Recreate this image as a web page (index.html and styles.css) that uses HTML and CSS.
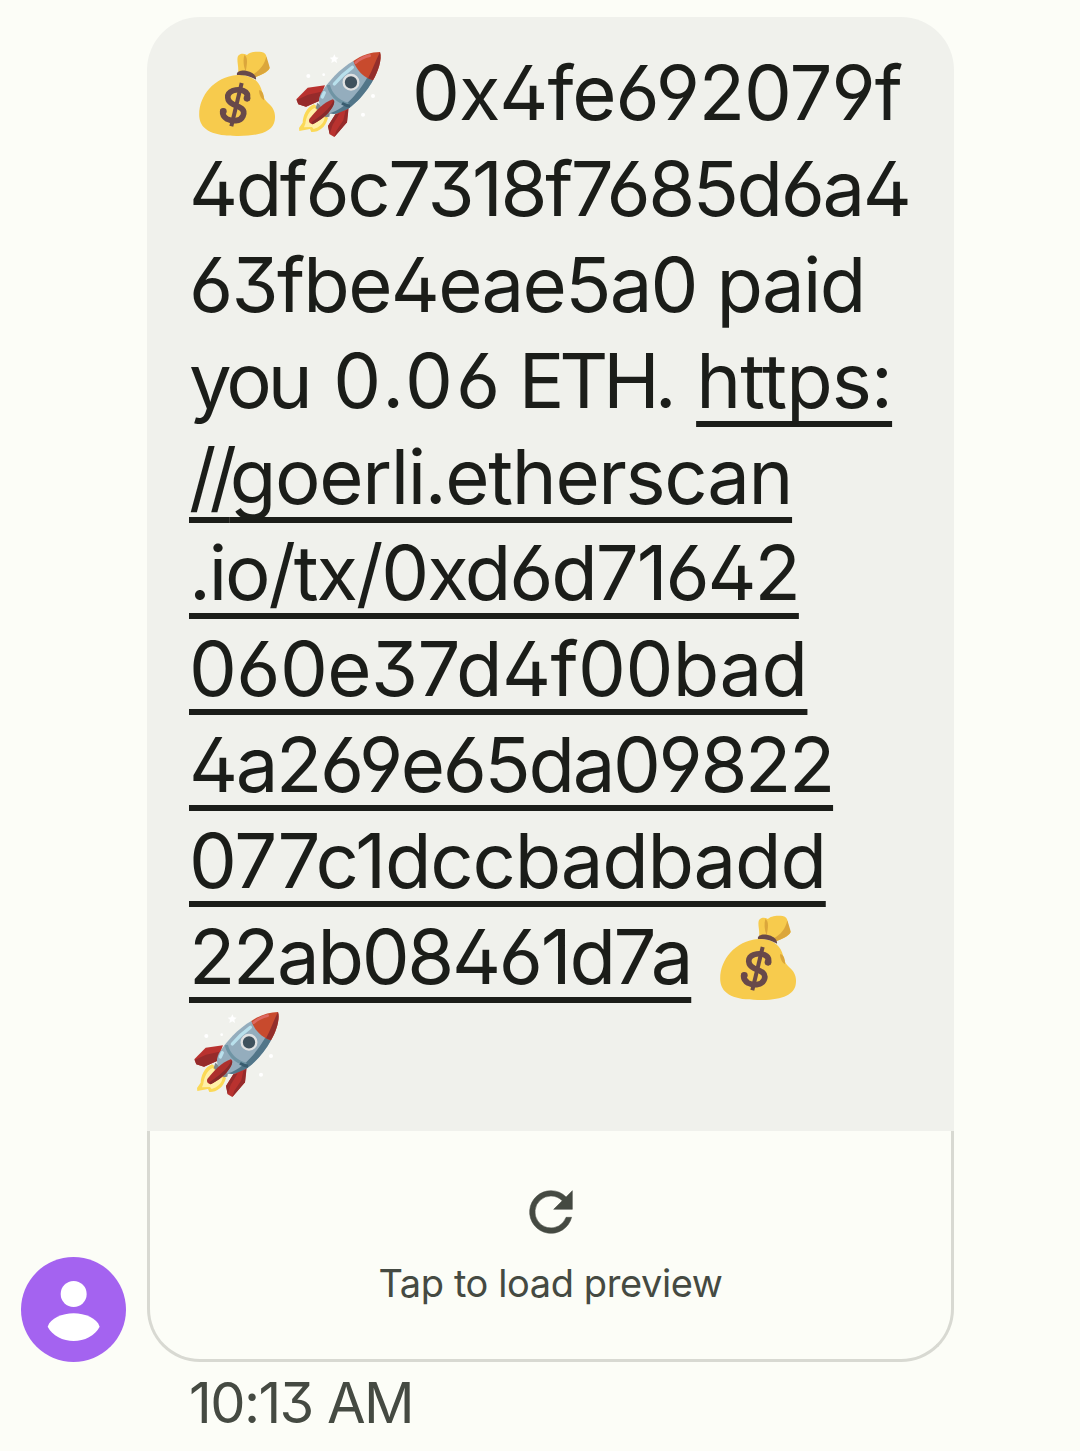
FILE: index.html
```html
<!DOCTYPE html>
<html lang="en">
<head>
<meta charset="utf-8">
<title>Messages</title>
<link rel="stylesheet" href="styles.css">
</head>
<body>
<svg class="defs" aria-hidden="true">
  <symbol id="moneybag" viewBox="27 30 288 264">
    <path fill="#f7cb4d" d="M174 98C178 82 166 53 177 45C184 39 193 41 201 45C207 37 226 33 245 36C257 38 261 46 259 62C258 70 268 76 269 84C264 98 241 105 226 112Z"/>
    <path fill="#dba63b" d="M193 45C204 51 202 70 197 94C190 79 189 59 193 45ZM259 49C264 65 268 77 269 84C262 98 242 104 226 112L219 103C239 92 254 74 259 49Z"/>
    <path fill="#f7cb4d" d="M172 105C201 103 233 115 243 145C250 164 249 176 264 189C281 203 288 220 284 242C279 271 246 288 176 288C105 289 63 274 58 232C53 174 98 111 172 105Z"/>
    <path fill="#dba63b" d="M237 151C247 149 253 166 252 181C244 177 237 164 237 151Z"/>
    <path fill="#68494a" d="M171 105C168 95 182 90 198 92C215 95 230 105 228 119C219 114 200 103 171 105Z"/>
    <path fill="none" stroke="#68494a" stroke-width="12" d="M185 129L154 259"/>
    <path fill="none" stroke="#68494a" stroke-width="17" stroke-linecap="round" d="M202 175C207 153 181 145 159 152C136 161 140 184 160 193C182 202 198 209 189 228C181 246 155 244 141 237C131 231 127 224 128 214"/>
    <circle cx="201" cy="175" r="10" fill="#68494a"/>
    <circle cx="130" cy="214" r="10" fill="#68494a"/>
  </symbol>
  <symbol id="rocket" viewBox="27 30 288 264">
    <g fill="#fff">
      <path d="M157 43L161 52L170 53L163 59L165 69L157 64L148 69L150 59L143 53L153 52Z"/>
      <circle cx="79" cy="108" r="6"/><circle cx="125" cy="104" r="4"/>
      <circle cx="273" cy="168" r="6"/><circle cx="243" cy="224" r="6"/>
    </g>
    <path fill="#b9322f" d="M129 136L77 143L43 178L49 193L72 200L111 183Z"/>
    <path fill="#962b2b" d="M118 155L78 164L44 180L49 193L72 200L111 183Z"/>
    <path fill="#fbd957" d="M96 193C72 202 63 229 62 248L51 264L52 273L84 267L88 276C109 277 130 264 138 234L112 204Z"/>
    <path fill="#fff0a8" d="M98 204C81 210 73 232 70 251L66 262L90 261L95 267C111 262 126 250 128 233Z"/>
    <path fill="#7d868b" d="M106 188L101 204L131 232L142 230L144 218Z"/>
    <path fill="#94adbd" d="M214 63C174 86 137 126 117 160C107 180 109 196 125 212C140 224 160 223 175 219C208 207 250 164 273 121C260 95 239 77 214 63Z"/>
    <path fill="#527689" d="M260 106L273 121C250 164 208 207 175 219C160 223 148 222 143 220C190 208 235 151 260 106Z"/>
    <path fill="#c84a2d" d="M214 63C239 45 269 36 294 36C301 57 288 96 273 121C245 113 224 91 214 63Z"/>
    <path fill="#932e2b" d="M294 36C301 57 288 96 273 121L258 115C272 89 281 61 294 36Z"/>
    <path fill="none" stroke="#dd6860" stroke-width="8" stroke-linecap="round" d="M221 68C235 56 249 50 263 47"/>
    <path fill="none" stroke="#6f94a4" stroke-width="10" d="M139 135C145 161 166 186 199 193"/>
    <path fill="none" stroke="#395d70" stroke-width="9" d="M180 190Q191 197 204 199"/>
    <path fill="none" stroke="#b9e0ec" stroke-width="10" stroke-linecap="round" d="M157 132Q180 104 211 82M121 171L127 158"/>
    <circle cx="207" cy="127" r="22" fill="#3f515d" stroke="#e0e1e2" stroke-width="7"/>
    <path fill="#b9322f" d="M198 207L160 223L138 258L143 283L157 291L195 247Z"/>
    <path fill="#962b2b" d="M160 223L138 258L143 283L152 254L172 221ZM200 205L195 247L157 291L163 272L184 241L190 213Z"/>
    <path fill="#ad302d" d="M152 178C160 181 157 191 151 202C137 225 115 242 92 253C83 251 79 245 82 237C101 213 125 188 152 178Z"/>
    <path fill="#872a2b" d="M155 181C158 188 156 194 151 202C137 225 115 242 92 253L88 247C115 229 144 207 155 181Z"/>
  </symbol>
</svg>
<main class="thread">
  <div class="message">
    <svg class="avatar" viewBox="0 0 315 315" role="img" aria-label="Contact">
      <circle cx="157.500" cy="157.500" r="157.500" fill="#a463f0"/>
      <circle cx="158" cy="111" r="39" fill="#fff"/>
      <path fill="#fff" d="M80 209C88 184 124 169 158 169C192 169 228 184 236 209C222 236 190 252 158 252C126 252 94 236 80 209Z"/>
    </svg>
    <article class="bubble">
      <p class="text">
        <span class="line l1"><svg class="emoji gap"><use href="#moneybag"/></svg><svg class="emoji"><use href="#rocket"/></svg><span class="address">0x4fe692079f</span></span>
        <span class="line l2">4df6c7318f7685d6a4</span>
        <span class="line l3">63fbe4eae5a0 paid</span>
        <span class="line l4">you <span class="amount">0.06</span> <span class="unit">ETH.</span> <a class="link scheme">https:</a></span>
        <span class="line l5"><a class="link"><span class="slashes">//</span>goerli.etherscan</a></span>
        <span class="line l6"><a class="link">.io/tx/0xd6d71642</a></span>
        <span class="line l7"><a class="link">060e37d4f00bad</a></span>
        <span class="line l8"><a class="link">4a269e65da09822</a></span>
        <span class="line l9"><a class="link">077c1dccbadbadd</a></span>
        <span class="line l10"><a class="link">22ab08461d7a</a><svg class="emoji trail"><use href="#moneybag"/></svg></span>
        <span class="line"><svg class="emoji"><use href="#rocket"/></svg></span>
      </p>
      <div class="preview">
        <svg class="refresh" viewBox="0 0 24 24"><path d="M17.650 6.350A7.958 7.958 0 0 0 12 4a8 8 0 1 0 7.730 10h-2.080A6 6 0 1 1 12 6c1.660 0 3.140.690 4.220 1.780L13 11h7V4z"/></svg>
        <span class="hint">Tap to load preview</span>
      </div>
    </article>
  </div>
  <time class="time">10:13 AM</time>
</main>
</body>
</html>
```
FILE: styles.css
```css
* { box-sizing: border-box; }
body {
  margin: 0;
  background: #fcfdf7;
  color: #1b1d19;
  font-family: Inter, "Open Sans", sans-serif;
  font-feature-settings: "cv03", "cv04", "ss01", "calt" 0;
}
.defs { position: absolute; width: 0; height: 0; }
.thread { height: 1451px; padding: 17px 0 0 21px; overflow: hidden; }
.message { display: flex; align-items: flex-end; gap: 21px; height: 1345px; }
.avatar { width: 105px; height: 105px; flex: none; }
.bubble {
  display: flex;
  flex-direction: column;
  width: 807px;
  height: 1345px;
}
.text {
  margin: 0;
  height: 1114px;
  padding: 27px 0 0 42px;
  background: #f0f1ec;
  border-radius: 53px 53px 0 0;
  font-size: 76px;
  line-height: 96px;
  white-space: nowrap;
}
.line { display: block; height: 96px; letter-spacing: -4px; }
.l1 { letter-spacing: -1.050px; }
.l2 { letter-spacing: -2.450px; }
.l3 { letter-spacing: -1.700px; }
.l5 { letter-spacing: -1.350px; }
.l6 { letter-spacing: -2.100px; }
.l7 { letter-spacing: -0.600px; }
.l8 { letter-spacing: -2.350px; }
.l9 { letter-spacing: -1.200px; }
.l10 { letter-spacing: -2.300px; }
.amount { margin-left: 7px; letter-spacing: 3px; }
.unit { margin-left: -2px; letter-spacing: -5px; }
.scheme { margin-left: 7px; letter-spacing: -0.900px; }
.slashes { letter-spacing: -7px; }
.link {
  color: inherit;
  text-decoration: underline;
  text-decoration-thickness: 6px;
  text-underline-offset: 13px;
  text-decoration-skip-ink: none;
}
.emoji { width: 96px; height: 88px; vertical-align: -18px; }
.gap { margin-right: 6px; }
.address { margin-left: 25px; }
.trail { margin-left: 19px; }
.preview {
  flex: 1;
  display: flex;
  flex-direction: column;
  align-items: center;
  padding-top: 49px;
  border: 3px solid #d8d9d2;
  border-top: 0;
  border-radius: 0 0 53px 53px;
  color: #454a42;
}
.refresh { width: 64px; height: 64px; fill: currentColor; stroke: currentColor; stroke-width: 0.200; }
.hint { margin-top: 15px; font-size: 38px; line-height: 48px; letter-spacing: -0.400px; }
.time {
  display: block;
  margin: 7px 0 0 168px;
  font-size: 56px;
  line-height: 68px;
  letter-spacing: -1.600px;
  color: #454a42;
}
```
